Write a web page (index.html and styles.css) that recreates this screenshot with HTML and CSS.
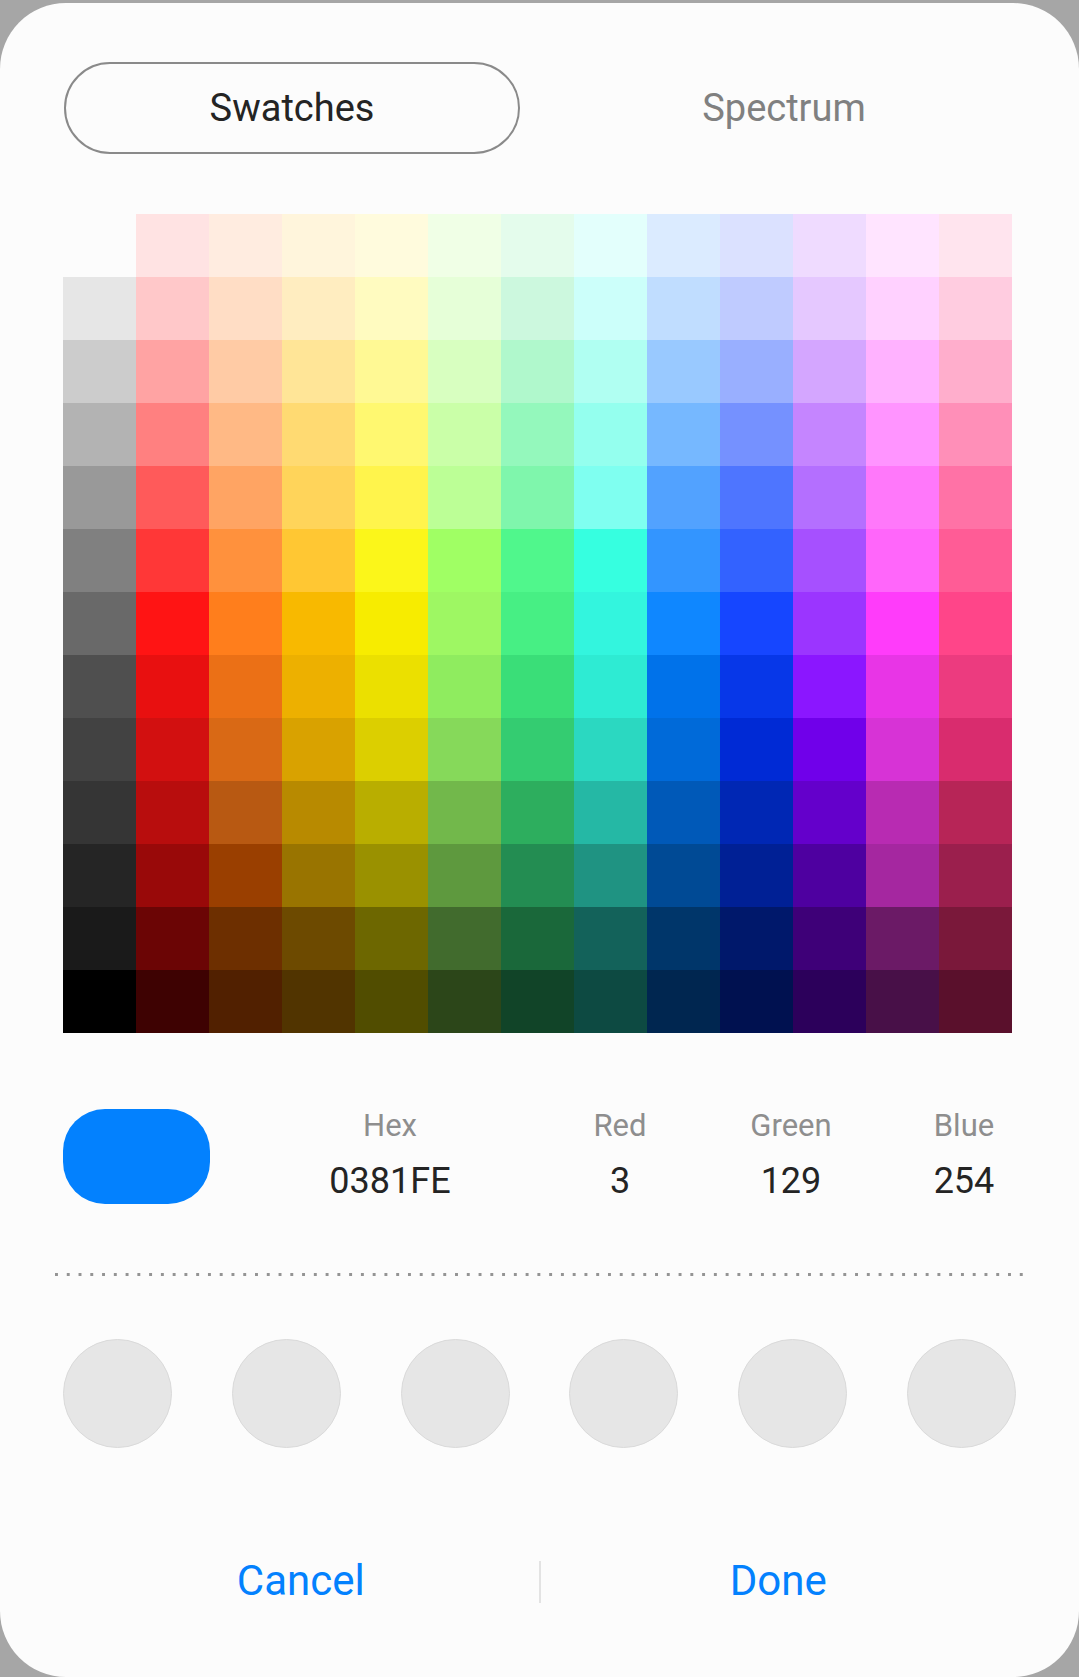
FILE: index.html
```html
<!DOCTYPE html>
<html lang="en">
<head>
<meta charset="utf-8">
<title>Color picker</title>
<link rel="stylesheet" href="styles.css">
</head>
<body>
<div class="dialog">
  <div class="tabs">
    <div class="tab tab-active">Swatches</div>
    <div class="tab">Spectrum</div>
  </div>

  <div class="grid">
    <div class="cell"></div><div class="cell" style="background:#ffe3e3"></div><div class="cell" style="background:#ffece0"></div><div class="cell" style="background:#fff5dc"></div><div class="cell" style="background:#fffbdd"></div><div class="cell" style="background:#f0ffe6"></div><div class="cell" style="background:#e4fcec"></div><div class="cell" style="background:#e3fffc"></div><div class="cell" style="background:#dbebff"></div><div class="cell" style="background:#dbe1ff"></div><div class="cell" style="background:#efdbff"></div><div class="cell" style="background:#ffe4ff"></div><div class="cell" style="background:#ffe4ee"></div>
    <div class="cell" style="background:#e6e6e6"></div><div class="cell" style="background:#ffc8c9"></div><div class="cell" style="background:#ffddc5"></div><div class="cell" style="background:#ffedc0"></div><div class="cell" style="background:#fffbc0"></div><div class="cell" style="background:#e6ffd8"></div><div class="cell" style="background:#ccf8de"></div><div class="cell" style="background:#ccfffa"></div><div class="cell" style="background:#c0ddff"></div><div class="cell" style="background:#bfcbff"></div><div class="cell" style="background:#e5c8ff"></div><div class="cell" style="background:#ffd1ff"></div><div class="cell" style="background:#ffcce0"></div>
    <div class="cell" style="background:#cccccc"></div><div class="cell" style="background:#ffa3a3"></div><div class="cell" style="background:#ffcba5"></div><div class="cell" style="background:#ffe597"></div><div class="cell" style="background:#fff994"></div><div class="cell" style="background:#d8ffc0"></div><div class="cell" style="background:#b0f8cc"></div><div class="cell" style="background:#b0fff2"></div><div class="cell" style="background:#99c9ff"></div><div class="cell" style="background:#99afff"></div><div class="cell" style="background:#d4a6ff"></div><div class="cell" style="background:#ffb2ff"></div><div class="cell" style="background:#ffaecc"></div>
    <div class="cell" style="background:#b3b3b3"></div><div class="cell" style="background:#ff8080"></div><div class="cell" style="background:#ffb985"></div><div class="cell" style="background:#ffda72"></div><div class="cell" style="background:#fff870"></div><div class="cell" style="background:#caffa8"></div><div class="cell" style="background:#94f8bc"></div><div class="cell" style="background:#94ffee"></div><div class="cell" style="background:#76b8ff"></div><div class="cell" style="background:#7591ff"></div><div class="cell" style="background:#c585ff"></div><div class="cell" style="background:#ff94ff"></div><div class="cell" style="background:#ff8fb8"></div>
    <div class="cell" style="background:#999999"></div><div class="cell" style="background:#ff5a5a"></div><div class="cell" style="background:#ffa463"></div><div class="cell" style="background:#ffd45a"></div><div class="cell" style="background:#fff44c"></div><div class="cell" style="background:#bcff96"></div><div class="cell" style="background:#7ff6ac"></div><div class="cell" style="background:#7ffff0"></div><div class="cell" style="background:#52a2ff"></div><div class="cell" style="background:#4e75ff"></div><div class="cell" style="background:#b46fff"></div><div class="cell" style="background:#ff78fa"></div><div class="cell" style="background:#ff72a6"></div>
    <div class="cell" style="background:#808080"></div><div class="cell" style="background:#ff3737"></div><div class="cell" style="background:#ff913d"></div><div class="cell" style="background:#ffc733"></div><div class="cell" style="background:#fbf61a"></div><div class="cell" style="background:#a0ff64"></div><div class="cell" style="background:#50f78c"></div><div class="cell" style="background:#36ffe0"></div><div class="cell" style="background:#3395ff"></div><div class="cell" style="background:#3362ff"></div><div class="cell" style="background:#a650ff"></div><div class="cell" style="background:#ff66fa"></div><div class="cell" style="background:#ff5c96"></div>
    <div class="cell" style="background:#696969"></div><div class="cell" style="background:#ff1414"></div><div class="cell" style="background:#ff7e1c"></div><div class="cell" style="background:#f8b900"></div><div class="cell" style="background:#f7ec00"></div><div class="cell" style="background:#9ef763"></div><div class="cell" style="background:#47ef84"></div><div class="cell" style="background:#33f5de"></div><div class="cell" style="background:#0f87ff"></div><div class="cell" style="background:#1646ff"></div><div class="cell" style="background:#9b35ff"></div><div class="cell" style="background:#ff3cfa"></div><div class="cell" style="background:#ff4589"></div>
    <div class="cell" style="background:#4f4f4f"></div><div class="cell" style="background:#e81010"></div><div class="cell" style="background:#eb7016"></div><div class="cell" style="background:#edb000"></div><div class="cell" style="background:#ebe000"></div><div class="cell" style="background:#8fec5f"></div><div class="cell" style="background:#3ade78"></div><div class="cell" style="background:#2eebd3"></div><div class="cell" style="background:#0072ea"></div><div class="cell" style="background:#0737e8"></div><div class="cell" style="background:#8b16ff"></div><div class="cell" style="background:#e835e6"></div><div class="cell" style="background:#ec3b7f"></div>
    <div class="cell" style="background:#424242"></div><div class="cell" style="background:#d21010"></div><div class="cell" style="background:#d96915"></div><div class="cell" style="background:#d9a200"></div><div class="cell" style="background:#dccf00"></div><div class="cell" style="background:#86d95a"></div><div class="cell" style="background:#34cc71"></div><div class="cell" style="background:#2bd8c1"></div><div class="cell" style="background:#006ad9"></div><div class="cell" style="background:#002ad5"></div><div class="cell" style="background:#7000ea"></div><div class="cell" style="background:#d733d6"></div><div class="cell" style="background:#d92c6e"></div>
    <div class="cell" style="background:#353535"></div><div class="cell" style="background:#b80d0d"></div><div class="cell" style="background:#b85912"></div><div class="cell" style="background:#b88a00"></div><div class="cell" style="background:#b9ae00"></div><div class="cell" style="background:#72b84b"></div><div class="cell" style="background:#2dae5e"></div><div class="cell" style="background:#25b8a5"></div><div class="cell" style="background:#0059b8"></div><div class="cell" style="background:#0027b4"></div><div class="cell" style="background:#6400cb"></div><div class="cell" style="background:#b82bb2"></div><div class="cell" style="background:#b72557"></div>
    <div class="cell" style="background:#252525"></div><div class="cell" style="background:#990909"></div><div class="cell" style="background:#9a3f00"></div><div class="cell" style="background:#997400"></div><div class="cell" style="background:#9a9100"></div><div class="cell" style="background:#5e993e"></div><div class="cell" style="background:#238d52"></div><div class="cell" style="background:#1f9382"></div><div class="cell" style="background:#004a95"></div><div class="cell" style="background:#002095"></div><div class="cell" style="background:#4e00a0"></div><div class="cell" style="background:#a527a0"></div><div class="cell" style="background:#9b1f4d"></div>
    <div class="cell" style="background:#1a1a1a"></div><div class="cell" style="background:#6b0505"></div><div class="cell" style="background:#6d2f00"></div><div class="cell" style="background:#6d4a00"></div><div class="cell" style="background:#6d6700"></div><div class="cell" style="background:#416b2d"></div><div class="cell" style="background:#1a683a"></div><div class="cell" style="background:#13625a"></div><div class="cell" style="background:#00366a"></div><div class="cell" style="background:#00186b"></div><div class="cell" style="background:#3e0078"></div><div class="cell" style="background:#6b1a66"></div><div class="cell" style="background:#7a183a"></div>
    <div class="cell" style="background:#000000"></div><div class="cell" style="background:#3e0202"></div><div class="cell" style="background:#512000"></div><div class="cell" style="background:#513400"></div><div class="cell" style="background:#514d00"></div><div class="cell" style="background:#2c4619"></div><div class="cell" style="background:#114428"></div><div class="cell" style="background:#0d4a42"></div><div class="cell" style="background:#002650"></div><div class="cell" style="background:#001150"></div><div class="cell" style="background:#2c005b"></div><div class="cell" style="background:#481048"></div><div class="cell" style="background:#5a102c"></div>
  </div>

  <div class="info">
    <div class="swatch"></div>
    <div class="field field-hex">
      <div class="label">Hex</div>
      <div class="value">0381FE</div>
    </div>
    <div class="field field-red">
      <div class="label">Red</div>
      <div class="value">3</div>
    </div>
    <div class="field field-green">
      <div class="label">Green</div>
      <div class="value">129</div>
    </div>
    <div class="field field-blue">
      <div class="label">Blue</div>
      <div class="value">254</div>
    </div>
  </div>

  <div class="dots"></div>

  <div class="recent">
    <div class="circle"></div>
    <div class="circle"></div>
    <div class="circle"></div>
    <div class="circle"></div>
    <div class="circle"></div>
    <div class="circle"></div>
  </div>

  <div class="buttons">
    <div class="btn">Cancel</div>
    <div class="divider"></div>
    <div class="btn">Done</div>
  </div>
</div>
</body>
</html>
```

FILE: styles.css
```css
* { box-sizing: border-box; }

html, body {
  margin: 0;
  padding: 0;
}

body {
  width: 1079px;
  height: 1677px;
  background: #a6a6a6;
  padding-top: 3px;
  overflow: hidden;
  font-family: Roboto, "Noto Sans", sans-serif;
}

.dialog {
  height: 1674px;
  background: #fcfcfc;
  border-radius: 66px;
  padding: 59px 63px 0 63px;
  display: flex;
  flex-direction: column;
}

.tabs {
  display: grid;
  grid-template-columns: 456px 456px;
  column-gap: 36px;
  margin: 0 1px;
  height: 92px;
}

.tab {
  display: flex;
  align-items: center;
  justify-content: center;
  font-size: 38px;
  color: #808080;
  border-radius: 46px;
}

.tab-active {
  color: #242424;
  border: 2.5px solid #8a8a8a;
}

.grid {
  margin-top: 60px;
  display: grid;
  grid-template-columns: repeat(13, 73px);
  grid-template-rows: repeat(13, 63px);
}

.info {
  margin-top: 75px;
  display: grid;
  grid-template-columns: 147px 360px 100px 242px 104px;
  align-items: start;
}

.swatch {
  margin-top: 1px;
  width: 147px;
  height: 95px;
  border-radius: 42px;
  background: #0381fe;
}

.field {
  display: flex;
  flex-direction: column;
  align-items: center;
}

.label {
  font-size: 31px;
  line-height: 36px;
  color: #8e8e8e;
}

.value {
  margin-top: 15px;
  font-size: 36px;
  line-height: 44px;
  color: #242424;
}

.dots {
  margin: 69px -8px 0 -8px;
  height: 3px;
  background-image: linear-gradient(to right, #949494 3.4px, transparent 3.4px);
  background-size: 11.77px 3px;
  background-repeat: repeat-x;
}

.recent {
  margin-top: 63px;
  display: flex;
  justify-content: space-between;
}

.circle {
  width: 109px;
  height: 109px;
  border-radius: 50%;
  background: #e6e6e6;
  border: 1.5px solid #dadada;
}

.buttons {
  margin-top: 108px;
  height: 50px;
  display: flex;
  align-items: center;
}

.btn {
  flex: 1;
  text-align: center;
  font-size: 42px;
  line-height: 50px;
  color: #0381fe;
}

.divider {
  width: 2px;
  height: 42px;
  margin-top: 2px;
  background: #e3e3e3;
}
```
